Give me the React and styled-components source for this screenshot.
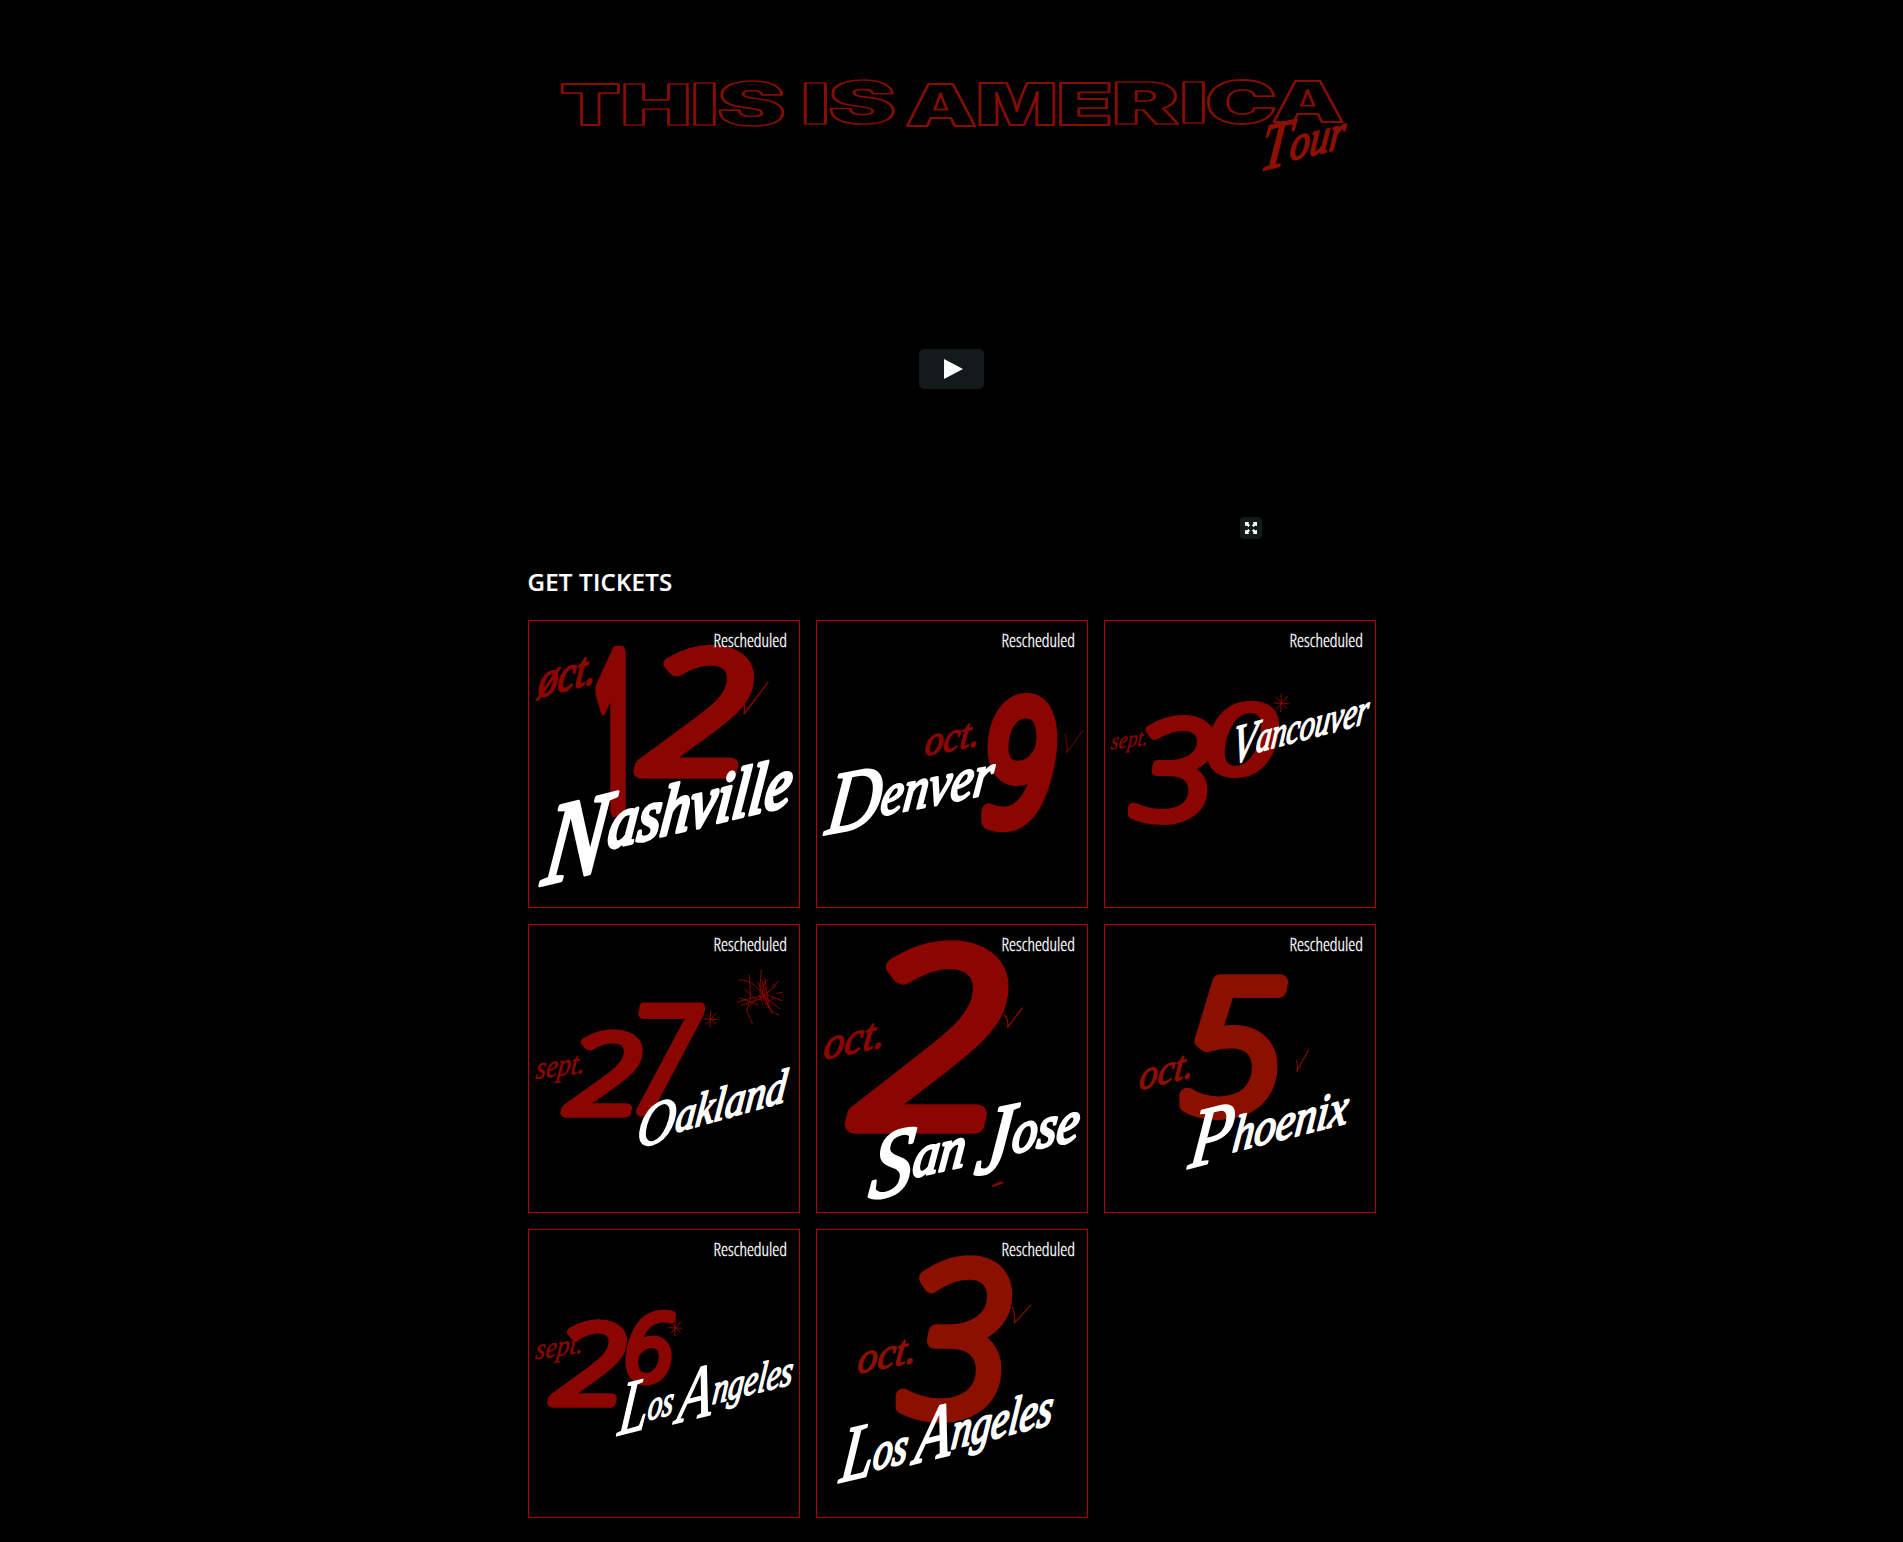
import React from "react";
import styled, { createGlobalStyle, css } from "styled-components";

const GlobalStyle = createGlobalStyle`
  *, *::before, *::after { box-sizing: border-box; }
  html, body { margin: 0; background: #000; }
  body { font-family: "Open Sans", "Noto Sans", sans-serif; color: #fff; }
`;

const Page = styled.main`
  width: 848px;
  min-height: 1542px;
  margin: 0 auto;
  display: flex;
  flex-direction: column;
`;

const Banner = styled.header`
  height: 189px;
`;

const BannerArt = styled.svg`
  display: block;
  width: 848px;
  height: 189px;
  overflow: visible;
`;

const Player = styled.section`
  position: relative;
  align-self: center;
  width: 640px;
  height: 360px;
  display: flex;
  align-items: center;
  justify-content: center;
`;

const PlayerButton = styled.button`
  display: flex;
  align-items: center;
  justify-content: center;
  padding: 0;
  border: 0;
  border-radius: 5px;
  background: #121b1a;
  color: #fff;
  ${({ $corner }) =>
    $corner
      ? css`
          position: absolute;
          right: 10px;
          bottom: 10px;
          width: 22px;
          height: 22px;
          border-radius: 4px;
        `
      : css`
          width: 65px;
          height: 40px;
        `}
`;

const Icon = styled.svg`
  display: block;
  fill: currentColor;
`;

const Heading = styled.h2`
  margin: 16.2px 0 21.5px;
  font-size: 24px;
  line-height: 33px;
  font-weight: 600;
  letter-spacing: 0.25px;
  text-transform: uppercase;
  -webkit-text-stroke: 0.2px #fff;
`;

const TicketGrid = styled.section`
  display: grid;
  grid-template-columns: repeat(3, 272px);
  grid-auto-rows: 288.7px;
  gap: 16px;
`;

const Ticket = styled.a`
  position: relative;
  display: block;
  border: 1px solid #b40000;
  color: #fff;
  text-decoration: none;
`;

const TicketArt = styled.svg`
  display: block;
  width: 272px;
  height: 288.6px;
  margin: -1px;
  overflow: visible;
`;

const Status = styled.span`
  position: absolute;
  top: 6px;
  right: 11.6px;
  font-size: 17.6px;
  line-height: 26px;
  font-weight: 300;
  font-stretch: 75%;
  -webkit-text-stroke: 0.3px #fff;
`;

const Stroked = styled.text`
  font-family: ${({ $family }) => $family};
  font-weight: ${({ $weight }) => $weight};
  font-style: ${({ $style }) => $style};
  font-size: 100px;
  fill: ${({ $fill }) => $fill};
  stroke: ${({ $ink }) => $ink};
  stroke-width: ${({ $thick }) => $thick}px;
  stroke-linejoin: round;
  vector-effect: non-scaling-stroke;
`;

const Mark = styled.path`
  fill: none;
  stroke: ${({ $ink }) => $ink};
  stroke-width: ${({ $thick }) => $thick || 4};
  stroke-linecap: round;
  stroke-linejoin: round;
  opacity: ${({ $dim }) => $dim || 1};
`;

const SERIF = '"Liberation Serif", serif';
const SANS = '"Open Sans", sans-serif';
const canvas = document.createElement("canvas").getContext("2d");

function measure(text, family, weight, style) {
  canvas.font = `${style} ${weight} 100px ${family}`;
  return canvas.measureText(text);
}

/* One glyph stretched so that its ink fills box = [left, top, right, bottom].
   unit is the number of drawing units in one screen pixel. */
function Fitted({ text, box, family = SANS, weight = 300, style = "italic", fill, ink, thick, unit = 1 }) {
  const m = measure(text, family, weight, style);
  const half = fill === "none" ? 0 : thick / 2;
  const [l, t, r, b] = [box[0] + half, box[1] + half, box[2] - half, box[3] - half];
  const sx = (r - l) / (m.actualBoundingBoxLeft + m.actualBoundingBoxRight);
  const sy = (b - t) / (m.actualBoundingBoxAscent + m.actualBoundingBoxDescent);
  const e = l + m.actualBoundingBoxLeft * sx;
  const f = t + m.actualBoundingBoxAscent * sy;
  return (
    <Stroked $family={family} $weight={weight} $style={style} $fill={fill} $ink={ink} $thick={thick / unit}
      transform={`matrix(${sx} 0 0 ${sy} ${e} ${f})`}>
      {text}
    </Stroked>
  );
}

/* A word on a rising baseline, with an enlarged first letter that hangs below the line. */
function Script({ text, from, to, y, rise, size, cap = 1, drop = 0, ink, thick, slant = 0.12, unit = 1 }) {
  const first = measure(text[0], SERIF, 400, "italic");
  const rest = measure(text.slice(1), SERIF, 400, "italic");
  const left = first.actualBoundingBoxLeft * cap;
  const total = left + first.width * cap + rest.actualBoundingBoxRight;
  const sx = (to - from - thick - slant * size * 0.35) / total;
  const sy = size / 100;
  const e = from + thick / 2 + left * sx;
  return (
    <Stroked $family={SERIF} $weight={400} $style="italic" $fill={ink} $ink={ink} $thick={thick / unit}
      transform={`matrix(${sx} ${-rise * sx} ${-slant * sy} ${sy} ${e} ${y - rise * left * sx})`}>
      <tspan fontSize={100 * cap} dy={drop}>{text[0]}</tspan>
      <tspan dy={-drop}>{text.slice(1)}</tspan>
    </Stroked>
  );
}

const check = (a, b, c) => `M${a} Q${b[0] + 4} ${b[1] - 22} ${b} L${c}`;
const star = (x, y, r) =>
  `M${x} ${y - r}L${x - 2} ${y + r}M${x - r * 0.8} ${y}L${x + r * 0.8} ${y + 2}` +
  `M${x - r * 0.55} ${y - r * 0.6}L${x + r * 0.65} ${y + r * 0.6}M${x + r * 0.7} ${y - r * 0.75}L${x - r * 0.5} ${y + r * 0.65}`;

const RED = "#8b0600";
const RUST = "#8c1000";

const shows = [
  {
    id: "nashville",
    month: { text: "øct.", from: 18, to: 202, y: 234, rise: 0.26, size: 150, thick: 13 },
    digits: [
      { text: "1", box: [190, 79, 306, 584], style: "normal", weight: 600, thick: 42 },
      { text: "2", box: [314, 69, 680, 479], thick: 46 },
    ],
    marks: [{ d: check([644, 226], [648, 282], [720, 187]) }],
    city: [{ text: "Nashville", from: 34, to: 799, y: 733, rise: 0.24, size: 216, cap: 1.62, drop: 29, thick: 17 }],
  },
  {
    id: "denver",
    month: { text: "oct.", from: 320, to: 488, y: 408, rise: 0.2, size: 125, thick: 11 },
    digits: [{ text: "9", box: [490, 218, 730, 632], thick: 50 }],
    marks: [{ d: check([747, 343], [752, 398], [800, 333]), dim: 0.6 }],
    city: [{ text: "Denver", from: 17, to: 542, y: 621, rise: 0.2, size: 180, cap: 1.48, drop: 13, thick: 13 }],
  },
  {
    id: "vancouver",
    month: { text: "sept.", from: 17, to: 130, y: 388, rise: 0.12, size: 72, thick: 5 },
    digits: [
      { text: "3", box: [72, 283, 337, 617], thick: 32 },
      { text: "0", box: [310, 237, 527, 477], thick: 30 },
    ],
    marks: [{ d: star(532, 249, 27), thick: 3 }],
    city: [{ text: "Vancouver", from: 382, to: 802, y: 416, rise: 0.265, size: 130, cap: 1.3, drop: 12, thick: 11 }],
  },
  {
    id: "oakland",
    month: { text: "sept.", from: 18, to: 168, y: 464, rise: 0.12, size: 95, thick: 7 },
    digits: [
      { text: "2", box: [96, 310, 345, 582], thick: 32 },
      { text: "7", box: [322, 234, 535, 577], thick: 28 },
    ],
    marks: [
      { d: star(548, 285, 24), thick: 3 },
      {
        d: "M632 168Q690 165 720 245Q734 272 752 272M663 152L668 215L656 262Q668 285 673 299M628 235Q665 220 720 214L763 230M636 222L690 243M700 136L696 190M708 180Q690 230 735 263M720 168Q680 185 704 240M745 184L692 226M664 247L718 190M702 170L718 236L738 222M690 175L732 268M640 244L700 224M752 172L732 188M706 216L755 254M650 196L684 226M710 162L724 250M765 205L745 208",
        thick: 2.8,
      },
    ],
    city: [{ text: "Oakland", from: 326, to: 784, y: 656, rise: 0.28, size: 145, cap: 1.3, drop: 11, thick: 12 }],
  },
  {
    id: "san-jose",
    month: { text: "oct.", from: 17, to: 202, y: 407, rise: 0.22, size: 135, thick: 10 },
    digits: [{ text: "2", box: [82, 42, 580, 632], thick: 60 }],
    marks: [
      { d: check([564, 272], [575, 310], [619, 252]) },
      { d: "M530 787Q545 775 560 776L530 787", thick: 5 },
    ],
    city: [
      { text: "San", from: 154, to: 452, y: 788, rise: 0.22, size: 180, cap: 1.62, drop: 22, thick: 15 },
      { text: "Jose", from: 472, to: 797, y: 710, rise: 0.2, size: 180, cap: 1.62, drop: 24, thick: 15 },
    ],
  },
  {
    id: "phoenix",
    red: RUST,
    month: { text: "oct.", from: 100, to: 266, y: 498, rise: 0.25, size: 125, thick: 10 },
    digits: [{ text: "5", box: [222, 150, 554, 587], thick: 48 }],
    marks: [{ d: check([577, 410], [579, 442], [614, 377]), dim: 0.8 }],
    city: [{ text: "Phoenix", from: 244, to: 739, y: 719, rise: 0.255, size: 155, cap: 1.65, drop: 10, thick: 12 }],
  },
  {
    id: "los-angeles-sept",
    month: { text: "sept.", from: 18, to: 162, y: 391, rise: 0.14, size: 88, thick: 6 },
    digits: [
      { text: "2", box: [56, 267, 298, 539], thick: 32 },
      { text: "6", box: [290, 241, 446, 469], thick: 26 },
    ],
    marks: [{ d: star(442, 296, 24), thick: 3 }],
    city: [
      { text: "Los", from: 261, to: 441, y: 597, rise: 0.25, size: 130, cap: 1.8, drop: 18, thick: 11 },
      { text: "Angeles", from: 431, to: 799, y: 554, rise: 0.25, size: 130, cap: 1.8, drop: 24, thick: 11 },
    ],
  },
  {
    id: "los-angeles-oct",
    red: RUST,
    month: { text: "oct.", from: 119, to: 297, y: 434, rise: 0.2, size: 130, thick: 10 },
    digits: [{ text: "3", box: [237, 76, 592, 582], thick: 46 }],
    marks: [{ d: check([589, 232], [595, 282], [644, 229]), dim: 0.8 }],
    city: [
      { text: "Los", from: 60, to: 280, y: 749, rise: 0.24, size: 160, cap: 1.5, drop: 8, thick: 13 },
      { text: "Angeles", from: 277, to: 715, y: 691, rise: 0.25, size: 160, cap: 1.5, drop: 10, thick: 13 },
    ],
  },
];

/* Letter boxes of the outlined banner title: [letter, left, top, right, bottom]. */
const title = [
  ["T", 33.5, 83.5, 90.5, 125],
  ["H", 96, 83, 160, 124.5],
  ["I", 166, 82.5, 187, 124.5],
  ["S", 191, 81.5, 255, 125.5],
  ["I", 276.5, 82, 298, 123.5],
  ["S", 302, 80.5, 365.5, 124],
  ["A", 379, 83.5, 447.5, 125.5],
  ["M", 451.5, 82.5, 526, 124.5],
  ["E", 532, 82, 582, 124.5],
  ["R", 587.5, 81.5, 650.5, 123.5],
  ["I", 655, 82, 676, 123],
  ["C", 680, 80, 746.5, 123.5],
  ["A", 745.5, 80.5, 815, 122],
];

export default function App() {
  return (
    <>
      <GlobalStyle />
      <Page>
        <Banner>
          <BannerArt viewBox="0 0 848 189">
            {title.map(([letter, ...box], i) => (
              <Fitted key={i} text={letter} box={box} family="Inter, sans-serif" weight={900} style="normal"
                fill="none" ink="#850d02" thick={2.4} />
            ))}
            <Script text="Tour" from={732.5} to={820} y={167} rise={0.24} size={50} cap={1.35} drop={7} ink="#8c1000" thick={4.2} />
          </BannerArt>
        </Banner>
        <Player>
          <PlayerButton aria-label="Play">
            <Icon width="20" height="20" viewBox="0 0 20 20" style={{ marginLeft: 4 }}>
              <path d="M0 0L19 10L0 20Z" />
            </Icon>
          </PlayerButton>
          <PlayerButton $corner aria-label="Fullscreen">
            <Icon width="12" height="12" viewBox="0 0 12 12">
              <path d="M0 0H4L3.4 1.6L5 3.3L3.5 5L1.6 3.4L0 4ZM12 0V4L10.4 3.4L8.5 5L7 3.3L8.6 1.6L8 0ZM0 12V8L1.6 8.6L3.5 7L5 8.7L3.4 10.4L4 12ZM12 12H8L8.6 10.4L7 8.7L8.5 7L10.4 8.6L12 8Z" />
            </Icon>
          </PlayerButton>
        </Player>
        <Heading>Get Tickets</Heading>
        <TicketGrid>
          {shows.map(({ id, red = RED, month, digits, marks, city }) => (
            <Ticket key={id}>
              <TicketArt viewBox="0 0 816 866">
                <Script {...month} ink={red} unit={3} />
                {digits.map((digit) => (
                  <Fitted key={digit.text} {...digit} fill={red} ink={red} unit={3} />
                ))}
                {marks.map((m, i) => (
                  <Mark key={i} d={m.d} $ink={red} $thick={m.thick} $dim={m.dim} />
                ))}
                {city.map((w) => (
                  <Script key={w.text} {...w} ink="#fff" unit={3} />
                ))}
              </TicketArt>
              <Status>Rescheduled</Status>
            </Ticket>
          ))}
        </TicketGrid>
      </Page>
    </>
  );
}
